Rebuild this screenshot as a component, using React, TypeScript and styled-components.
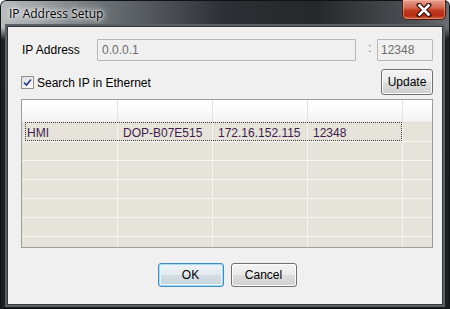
import styled, { createGlobalStyle } from "styled-components";

const GlobalStyle = createGlobalStyle`
  html, body { margin: 0; padding: 0; background: #ffffff; }
  body { font-family: "Liberation Sans", Arial, sans-serif; font-size: 12px; color: #000; }
`;

const Window = styled.div`
  width: 450px;
  height: 309px;
  box-sizing: border-box;
  display: flex;
  flex-direction: column;
  padding: 0 8px 5px 8px;
  border-radius: 6px 6px 0 0;
  background:
    linear-gradient(to bottom, rgba(0,0,0,0) 0px, rgba(0,0,0,0) 27px, #1d2023 40px, #1b1e21 100%),
    linear-gradient(to right, #b9bdc0 0%, #6e7377 22%, #2c3034 50%, #24282b 70%, #4d5155 92%, #6b6f73 100%);
  box-shadow: inset 0 0 0 1px #101214;
`;

const TitleBar = styled.div`
  height: 27px;
  display: flex;
  align-items: flex-start;
  margin: 0 -4px 0 0;
`;

const Title = styled.span`
  font-family: "Open Sans", "Noto Sans", sans-serif;
  font-size: 12px;
  line-height: 14px;
  margin-top: 7px;
  margin-left: 1px;
  color: #000;
  text-shadow: 0 0 6px #f4f4f4, 0 0 8px #ffffff, 0 0 3px #ffffff;
`;

const CloseButton = styled.div`
  margin-left: auto;
  width: 44px;
  height: 20px;
  box-sizing: border-box;
  border: 1px solid #4a1a12;
  border-top: none;
  border-radius: 0 0 5px 5px;
  background: linear-gradient(to bottom, #e8a08e 0%, #d46a52 40%, #c13b1f 55%, #b52c12 80%, #d0603e 100%);
  box-shadow: inset 0 0 0 1px rgba(255, 200, 180, 0.45);
  display: flex;
  align-items: center;
  justify-content: center;
`;

const Client = styled.div`
  flex: 1;
  display: flex;
  flex-direction: column;
  background: #f0f0f0;
  padding: 12px 9px 0 13px;
  box-shadow: 0 0 0 1px #35393c, 0 0 0 3px #5b6064;
`;

const FieldRow = styled.div`
  display: flex;
  align-items: center;
  height: 22px;
`;

const FieldLabel = styled.label`
  width: 75px;
  padding-left: 1px;
  font-size: 12px;
`;

const TextBox = styled.div<{ $width?: number; $pad: number }>`
  ${(p) => (p.$width ? `width: ${p.$width}px;` : "flex: 1;")}
  height: 22px;
  box-sizing: border-box;
  border: 1px solid #b7b7b7;
  border-radius: 1px;
  background: #f0f0f0;
  color: #6d6d6d;
  padding-left: ${(p) => p.$pad}px;
  line-height: 20px;
  font-size: 12px;
`;

const Colon = styled.span`
  width: 21px;
  box-sizing: border-box;
  padding-left: 12px;
  color: #7a7a7a;
  margin-top: -4px;
`;

const OptionRow = styled.div`
  display: flex;
  align-items: center;
  justify-content: space-between;
  height: 26px;
  margin-top: 8px;
`;

const CheckLabel = styled.label`
  display: flex;
  align-items: center;
  gap: 3px;
  font-size: 12px;
  margin-top: 1px;
`;

const CheckBox = styled.span`
  width: 13px;
  height: 13px;
  box-sizing: border-box;
  border: 1px solid #8e8f8f;
  background: linear-gradient(135deg, #dcdcdc 0%, #f4f4f4 60%, #ffffff 100%);
  display: flex;
  align-items: center;
  justify-content: center;
`;

const Button = styled.button<{ $width: number; $height: number; $default?: boolean }>`
  width: ${(p) => p.$width}px;
  height: ${(p) => p.$height}px;
  box-sizing: border-box;
  padding: 0;
  font-family: "Liberation Sans", Arial, sans-serif;
  font-size: 12px;
  color: #000;
  border-radius: 3px;
  border: 1px solid ${(p) => (p.$default ? "#3c8dc4" : "#707070")};
  background: ${(p) =>
    p.$default
      ? "linear-gradient(to bottom, #eef3f6 0%, #e3eaee 48%, #d3dde3 52%, #c9d4db 100%)"
      : "linear-gradient(to bottom, #f3f3f3 0%, #ebebeb 48%, #dddddd 52%, #cfcfcf 100%)"};
  box-shadow: ${(p) =>
    p.$default ? "inset 0 0 0 1px #a6daf5, inset 0 0 0 2px #e6f4fb" : "inset 0 0 0 1px #fcfcfc"};
`;

const Table = styled.div`
  margin-top: 4px;
  height: 149px;
  box-sizing: border-box;
  border: 1px solid #9c9c9c;
  background: #e6e3db;
  overflow: hidden;
`;

const cols = "96px 95px 95px 95px 1fr";

const HeaderRow = styled.div`
  display: grid;
  grid-template-columns: ${cols};
  height: 23px;
  box-sizing: border-box;
  border-bottom: 1px solid #dcdcdc;
  background: linear-gradient(to bottom, #ffffff 0%, #fbfbfb 50%, #f1f1f1 100%);
`;

const HeaderCell = styled.div`
  border-right: 1px solid #e4e4e4;
  &:last-child { border-right: none; }
`;

const Row = styled.div<{ $focused?: boolean }>`
  position: relative;
  display: grid;
  grid-template-columns: ${cols};
  height: 19px;
  box-sizing: border-box;
  border-bottom: 1px solid #f7f5f1;
  ${(p) =>
    p.$focused &&
    `&::after {
      content: "";
      position: absolute;
      left: 3px;
      top: -1px;
      width: 377px;
      height: 19px;
      box-sizing: border-box;
      border: 1px dotted #3a3a3a;
    }`}
`;

const Cell = styled.div`
  border-right: 1px solid #f7f5f1;
  padding-left: 5px;
  line-height: 20px;
  color: #3d1c4c;
  font-size: 12px;
  white-space: nowrap;
  overflow: hidden;
  &:last-child { border-right: none; }
`;

const ButtonRow = styled.div`
  display: flex;
  justify-content: center;
  gap: 7px;
  margin-top: 15px;
`;

const rows = [
  ["HMI", "DOP-B07E515", "172.16.152.115", "12348", ""],
  ["", "", "", "", ""],
  ["", "", "", "", ""],
  ["", "", "", "", ""],
  ["", "", "", "", ""],
  ["", "", "", "", ""],
  ["", "", "", "", ""],
];

export default function App() {
  return (
    <>
      <GlobalStyle />
      <Window>
        <TitleBar>
          <Title>IP Address Setup</Title>
          <CloseButton>
            <svg width="16" height="14" viewBox="0 0 16 14">
              <path d="M3 2 L13 12 M13 2 L3 12" stroke="#3a1208" strokeWidth="5" strokeLinecap="round" />
              <path d="M3.5 2.5 L12.5 11.5 M12.5 2.5 L3.5 11.5" stroke="#ffffff" strokeWidth="2.6" strokeLinecap="square" />
            </svg>
          </CloseButton>
        </TitleBar>
        <Client>
          <FieldRow>
            <FieldLabel>IP Address</FieldLabel>
            <TextBox $pad={4}>0.0.0.1</TextBox>
            <Colon>:</Colon>
            <TextBox $width={56} $pad={3}>12348</TextBox>
          </FieldRow>
          <OptionRow>
            <CheckLabel>
              <CheckBox>
                <svg width="9" height="9" viewBox="0 0 9 9">
                  <path d="M1 4.5 L3.5 7 L8 1.5" fill="none" stroke="#2a3f8c" strokeWidth="1.7" />
                </svg>
              </CheckBox>
              Search IP in Ethernet
            </CheckLabel>
            <Button $width={52} $height={26}>Update</Button>
          </OptionRow>
          <Table>
            <HeaderRow>
              {[0, 1, 2, 3, 4].map((i) => (
                <HeaderCell key={i} />
              ))}
            </HeaderRow>
            {rows.map((r, i) => (
              <Row key={i} $focused={i === 0}>
                {r.map((c, j) => (
                  <Cell key={j}>{c}</Cell>
                ))}
              </Row>
            ))}
          </Table>
          <ButtonRow>
            <Button $width={66} $height={24} $default>OK</Button>
            <Button $width={66} $height={24}>Cancel</Button>
          </ButtonRow>
        </Client>
      </Window>
    </>
  );
}
